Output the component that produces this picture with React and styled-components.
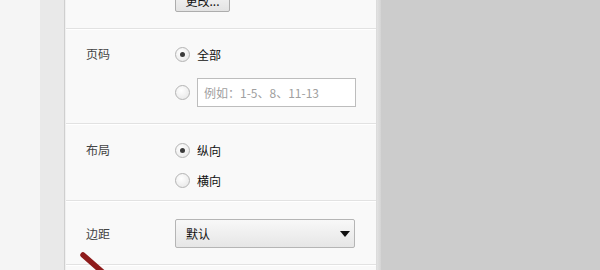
import styled, { createGlobalStyle } from "styled-components";

const Global = createGlobalStyle`
  html, body {
    margin: 0;
    padding: 0;
    background: #cccccc;
    font-family: "Noto Sans CJK SC", "Noto Sans", sans-serif;
    font-size: 12px;
  }
`;

const Page = styled.div`
  position: relative;
  display: flex;
  width: 600px;
  height: 270px;
  overflow: hidden;
  background: #cccccc;
`;
const Margin = styled.div`
  width: 40px;
  background: #f5f5f5;
`;
const Strip = styled.div`
  width: 24px;
  background: #e9e9e9;
  border-right: 1px solid #cfcfcf;
`;
const Panel = styled.div`
  width: 310px;
  background: #f9f9f9;
  border-left: 1px solid #f0f0f0;
  border-right: 1px solid #dcdcdc;
  display: flex;
  flex-direction: column;
`;
const Edge = styled.div`
  width: 4px;
  background: linear-gradient(to right, #e2e2e2, #d4d4d4);
`;
const Section = styled.div`
  display: grid;
  grid-template-columns: 109px 1fr;
  padding: ${(p) => p.pad};
  border-bottom: 1px solid #e2e2e2;
  box-shadow: 0 1px 0 #ffffff;
  margin-bottom: 1px;
  flex-shrink: 0;
`;
const TopSection = styled(Section)`
  height: 29px;
  box-sizing: border-box;
  grid-template-rows: 28px;
  align-items: end;
`;
const Label = styled.div`
  padding-left: 20px;
  color: #444;
  height: ${(p) => p.h}px;
  line-height: ${(p) => p.h}px;
`;
const Options = styled.div`
  display: flex;
  flex-direction: column;
  gap: ${(p) => p.gap}px;
`;
const Option = styled.label`
  display: flex;
  align-items: center;
  gap: 7px;
  height: ${(p) => p.h}px;
  color: #111;
`;
const Radio = styled.span`
  width: 13px;
  height: 13px;
  flex-shrink: 0;
  border-radius: 50%;
  border: 1px solid #b4b4b4;
  background: radial-gradient(circle at 40% 35%, #ffffff, #e4e4e4);
  display: flex;
  align-items: center;
  justify-content: center;
  &::after {
    content: "";
    width: 5px;
    height: 5px;
    border-radius: 50%;
    background: ${(p) => (p.checked ? "#3a3a3a" : "transparent")};
  }
`;
const Input = styled.div`
  width: 159px;
  height: 29px;
  box-sizing: border-box;
  border: 1px solid #bdbdbd;
  background: #fff;
  color: #a0a0a0;
  padding-left: 6px;
  display: flex;
  align-items: center;
`;
const Button = styled.div`
  width: 55px;
  height: 23px;
  margin-bottom: 16px;
  box-sizing: border-box;
  border: 1px solid #adadad;
  border-radius: 2px;
  background: linear-gradient(#f7f7f7, #e3e3e3);
  display: flex;
  align-items: center;
  justify-content: center;
  color: #111;
`;
const Select = styled.div`
  width: 180px;
  height: 29px;
  box-sizing: border-box;
  border: 1px solid #b5b5b5;
  border-radius: 2px;
  background: linear-gradient(#f8f8f8, #e6e6e6);
  display: flex;
  align-items: center;
  justify-content: space-between;
  padding: 0 4px 0 10px;
  color: #111;
`;
const Caret = styled.span`
  width: 0;
  height: 0;
  border-left: 5px solid transparent;
  border-right: 5px solid transparent;
  border-top: 6px solid #111;
`;
const Arrow = styled.svg`
  position: absolute;
  left: 75px;
  top: 248px;
`;

export default function App() {
  return (
    <Page>
      <Global />
      <Margin />
      <Strip />
      <Panel>
        <TopSection pad="0">
          <span />
          <Button>更改...</Button>
        </TopSection>
        <Section pad="10px 0 16px">
          <Label h={28}>页码</Label>
          <Options gap={10}>
            <Option h={28}>
              <Radio checked />
              全部
            </Option>
            <Option h={29}>
              <Radio />
              <Input>例如：1-5、8、11-13</Input>
            </Option>
          </Options>
        </Section>
        <Section pad="15px 0 10px">
          <Label h={20}>布局</Label>
          <Options gap={10}>
            <Option h={20}>
              <Radio checked />
              纵向
            </Option>
            <Option h={20}>
              <Radio />
              横向
            </Option>
          </Options>
        </Section>
        <Section pad="17px 0 16px">
          <Label h={29}>边距</Label>
          <Select>
            默认
            <Caret />
          </Select>
        </Section>
      </Panel>
      <Edge />
      <Arrow width="50" height="40" viewBox="0 0 50 40">
        <line x1="8" y1="7" x2="40" y2="35" stroke="#8e1b1b" strokeWidth="5.5" strokeLinecap="round" />
      </Arrow>
    </Page>
  );
}
